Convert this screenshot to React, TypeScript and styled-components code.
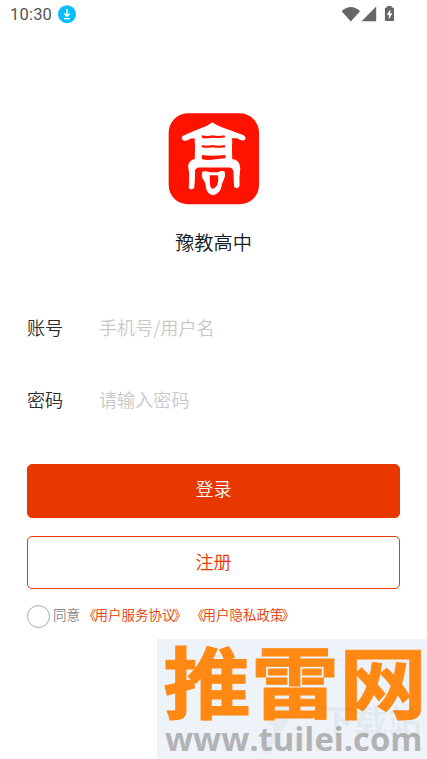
import React from "react";
import styled, { createGlobalStyle } from "styled-components";

const GlobalStyle = createGlobalStyle`
  * { box-sizing: border-box; }
  body {
    margin: 0;
    background: #fff;
    overflow: hidden;
    font-family: "Noto Sans CJK SC", "Noto Sans", sans-serif;
    text-spacing-trim: space-all;
  }
`;

const Screen = styled.main`
  width: 427px;
  height: 759px;
  display: flex;
  flex-direction: column;
  background: #fff;
  overflow: hidden;
`;

const StatusBar = styled.header`
  height: 30px;
  padding: 0 32px 0 10px;
  display: flex;
  justify-content: space-between;
  color: #666;
`;

const StatusGroup = styled.div`
  display: flex;
  align-items: flex-start;
`;

const Clock = styled.span`
  width: 48px;
  padding-top: 5px;
  font: 400 16.5px/20px Roboto, sans-serif;
  letter-spacing: 0.2px;
  color: #555;
`;

const Brand = styled.section`
  display: flex;
  flex-direction: column;
  align-items: center;
  padding-top: 83px;
`;

const AppName = styled.h1`
  margin: 21.5px 0 0.5px;
  font-size: 19.2px;
  line-height: 30px;
  font-weight: 350;
  color: #111a22;
`;

const Form = styled.form`
  padding: 48px 27px 0;
  display: flex;
  flex-direction: column;
`;

const Field = styled.label`
  height: 71.5px;
  display: grid;
  grid-template-columns: 72px 1fr;
  align-items: start;
  padding-top: 8px;
  font-size: 18.1px;
  line-height: 28px;
  font-weight: 350;
  color: #2c2c2c;
`;

const Input = styled.input`
  height: 28px;
  padding: 0;
  border: 0;
  outline: 0;
  background: none;
  font: 350 18.1px/28px "Noto Sans CJK SC", sans-serif;
  color: #333;
  &::placeholder { color: #c8c8c8; opacity: 1; }
`;

const Button = styled.button<{ $filled?: boolean }>`
  width: 373px;
  height: ${(p) => (p.$filled ? "53.5px" : "53px")};
  margin-top: ${(p) => (p.$filled ? "16px" : "18.5px")};
  padding: ${(p) => (p.$filled ? "0 0 6px" : "0 0 4px")};
  border: 1px solid #e83800;
  border-radius: 5px;
  background: ${(p) => (p.$filled ? "#e83800" : "#fff")};
  color: ${(p) => (p.$filled ? "#fff" : "#e83800")};
  font: 350 18px/28px "Noto Sans CJK SC", sans-serif;
`;

const Agreement = styled.div`
  display: flex;
  align-items: center;
  height: 23px;
  margin-top: 16px;
  font-size: 13.5px;
  line-height: 20px;
  font-weight: 350;
  white-space: nowrap;
  color: #888;
`;

const Circle = styled.span`
  width: 23px;
  height: 23px;
  margin-right: 3px;
  border: 1px solid #aaa;
  border-radius: 50%;
`;

const AgreementText = styled.span`
  padding-bottom: 5px;
`;

const PolicyLink = styled.span`
  color: #e83800;
`;

const OpenMark = styled.span`
  margin-left: 3px;
  margin-right: -2px;
`;

const CloseMark = styled.span`
  margin-left: -2px;
  margin-right: 1px;
`;

const Watermark = styled.aside`
  position: relative;
  align-self: flex-end;
  width: 270px;
  height: 120px;
  margin-top: 11px;
  background: #eef3fa;
  overflow: hidden;
`;

const SiteName = styled.div`
  position: absolute;
  left: 6px;
  top: 1px;
  font-size: 88px;
  line-height: 88px;
  font-weight: 700;
  white-space: nowrap;
  color: #ff8913;
  -webkit-text-stroke: 1px #ff8913;
  transform: scaleY(0.89);
  transform-origin: 0 0;
`;

const SiteUrl = styled.div`
  position: absolute;
  left: 8px;
  top: 80px;
  font: 700 32.8px/40px "Open Sans", sans-serif;
  white-space: nowrap;
  color: #b3b3b3;
`;

const FaintText = styled.div<{ $x: number; $y: number; $size: number; $alpha: number; $bold?: boolean }>`
  position: absolute;
  left: ${(p) => p.$x}px;
  top: ${(p) => p.$y}px;
  font-size: ${(p) => p.$size}px;
  line-height: 1;
  font-weight: ${(p) => (p.$bold ? 700 : 400)};
  white-space: nowrap;
  color: rgba(70, 90, 110, ${(p) => p.$alpha});
`;

const FaintMark = styled.svg`
  position: absolute;
  left: 100px;
  top: 58px;
`;

const DownloadIcon = () => (
  <svg width="18" height="30" viewBox="0 0 18 30">
    <circle cx="9" cy="14.2" r="9" fill="#0dbdfb" />
    <path d="M9 9v7M6.2 13.4 9 16.2l2.8-2.8M6 18.6h6" fill="none" stroke="#fff" strokeWidth="1.4" />
  </svg>
);

const StatusIcons = () => (
  <svg width="54" height="30" viewBox="341 0 54 30" fill="#666">
    <path d="M341.7 11.2Q350.8 3 360 11.2L350.8 21.4Z" />
    <path d="M376.2 6.6V21.2H361.6Z" />
    <path d="M387 6h4.6v1.6h1.2q1.2 0 1.2 1.2v11.1q0 1.2-1.2 1.2h-6.7q-1.2 0-1.2-1.2V8.8q0-1.2 1.2-1.2h.9z" />
    <path d="M390.3 9.2 386.7 15h2.2v4.2l3.5-6h-2.1z" fill="#fff" />
  </svg>
);

const Logo = () => (
  <svg width="92" height="92" viewBox="24 23 276 276">
    <rect x="26" y="24" width="271" height="273" rx="58" fill="#ff1200" />
    <g stroke="#fff" strokeLinejoin="round">
      <path
        d="M157 53Q145 63 119 72Q92 83 70 93Q64 97 71 104Q79 107 91 98H107Q104 108 107 118L106 163Q87 166 86 184Q91 204 88 247Q93 254 101 247Q104 215 103 194Q107 185 119 184L210 185Q220 187 222 199L224 243Q231 252 237 241Q235 217 239 189Q239 165 215 163L214 121Q217 110 213 97H232Q244 107 254 102Q257 94 247 90Q215 78 195 71Q170 62 157 53Z"
        fill="#fff"
        strokeWidth="3.5"
      />
      <path d="M126 90Q142 94 157 90Q175 94 193 90L196 96Q183 99 158 97Q139 100 126 98Z" fill="#ff1200" stroke="none" />
      <path d="M125 119Q142 122 157 119Q175 123 194 119L196 126Q176 129 158 126Q139 129 126 126Z" fill="#ff1200" stroke="none" />
      <path d="M126 149Q153 154 196 149L197 159Q181 161 166 162Q144 166 126 162Z" fill="#ff1200" stroke="none" />
      <path d="M131 202Q142 202 148 205H175Q181 200 190 202Q193 212 187 222Q180 235 179 247Q173 262 158 265Q146 262 142 246Q142 229 132 219Q128 208 131 202Z" fill="#fff" strokeWidth="9" />
      <path d="M149 210H174Q177 226 172 238Q166 249 157 250Q150 247 150 235Z" fill="#ff1200" stroke="none" />
    </g>
  </svg>
);

const Policy = ({ name }: { name: string }) => (
  <PolicyLink>
    <OpenMark>《</OpenMark>{name}<CloseMark>》</CloseMark>
  </PolicyLink>
);

export default function App() {
  return (
    <>
      <GlobalStyle />
      <Screen>
        <StatusBar>
          <StatusGroup><Clock>10:30</Clock><DownloadIcon /></StatusGroup>
          <StatusIcons />
        </StatusBar>
        <Brand>
          <Logo />
          <AppName>豫教高中</AppName>
        </Brand>
        <Form>
          <Field>账号<Input placeholder="手机号/用户名" /></Field>
          <Field>密码<Input type="password" placeholder="请输入密码" /></Field>
          <Button type="button" $filled>登录</Button>
          <Button type="button">注册</Button>
          <Agreement>
            <Circle />
            <AgreementText>同意<Policy name="用户服务协议" /><Policy name="用户隐私政策" /></AgreementText>
          </Agreement>
        </Form>
        <Watermark>
          <FaintMark width="50" height="60" viewBox="0 0 50 60">
            <path d="M15 30C-8 8 22-8 33 10C37 20 24 36 10 57L4 55L17 35Z" fill="#607060" opacity=".06" />
          </FaintMark>
          <SiteName>推雷网</SiteName>
          <SiteUrl>www.tuilei.com</SiteUrl>
          <FaintText $x={172} $y={16} $size={18} $alpha={0.035}>忘记密码?</FaintText>
          <FaintText $x={163} $y={64} $size={34} $alpha={0.07} $bold>下载站</FaintText>
        </Watermark>
      </Screen>
    </>
  );
}
